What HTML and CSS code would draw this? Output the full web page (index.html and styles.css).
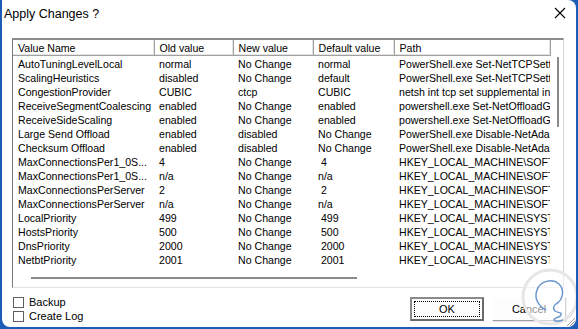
FILE: index.html
```html
<!DOCTYPE html>
<html>
<head>
	<title>Apply Changes ?</title>
	<link rel="stylesheet" href="styles.css">
</head>
<body>
	<div class="window">
		<div class="titlebar">
			<span class="title">Apply Changes ?</span>
			<svg class="close" width="12" height="12" viewBox="0 0 12 12">
				<path d="M1 1 L11 11 M11 1 L1 11" stroke="#000" stroke-width="1.1" fill="none"/>
			</svg>
		</div>

		<div class="list">
			<table>
				<colgroup>
					<col class="c-name">
					<col class="c-old">
					<col class="c-new">
					<col class="c-def">
					<col class="c-path">
				</colgroup>
				<thead>
					<tr>
						<th>Value Name</th>
						<th>Old value</th>
						<th>New value</th>
						<th>Default value</th>
						<th>Path</th>
					</tr>
				</thead>
				<tbody>
					<tr><td>AutoTuningLevelLocal</td><td>normal</td><td>No Change</td><td>normal</td><td>PowerShell.exe Set-NetTCPSetting</td></tr>
					<tr><td>ScalingHeuristics</td><td>disabled</td><td>No Change</td><td>default</td><td>PowerShell.exe Set-NetTCPSetting</td></tr>
					<tr><td>CongestionProvider</td><td>CUBIC</td><td>ctcp</td><td>CUBIC</td><td>netsh int tcp set supplemental internet</td></tr>
					<tr><td>ReceiveSegmentCoalescing</td><td>enabled</td><td>No Change</td><td>enabled</td><td>powershell.exe Set-NetOffloadGlobalSetting</td></tr>
					<tr><td>ReceiveSideScaling</td><td>enabled</td><td>No Change</td><td>enabled</td><td>powershell.exe Set-NetOffloadGlobalSetting</td></tr>
					<tr><td>Large Send Offload</td><td>enabled</td><td>disabled</td><td>No Change</td><td>PowerShell.exe Disable-NetAdapterLso</td></tr>
					<tr><td>Checksum Offload</td><td>enabled</td><td>disabled</td><td>No Change</td><td>PowerShell.exe Disable-NetAdapterChecksumOffload</td></tr>
					<tr><td>MaxConnectionsPer1_0S...</td><td>4</td><td>No Change</td><td>&nbsp;4</td><td>HKEY_LOCAL_MACHINE\SOFTWARE</td></tr>
					<tr><td>MaxConnectionsPer1_0S...</td><td>n/a</td><td>No Change</td><td>n/a</td><td>HKEY_LOCAL_MACHINE\SOFTWARE</td></tr>
					<tr><td>MaxConnectionsPerServer</td><td>2</td><td>No Change</td><td>&nbsp;2</td><td>HKEY_LOCAL_MACHINE\SOFTWARE</td></tr>
					<tr><td>MaxConnectionsPerServer</td><td>n/a</td><td>No Change</td><td>n/a</td><td>HKEY_LOCAL_MACHINE\SOFTWARE</td></tr>
					<tr><td>LocalPriority</td><td>499</td><td>No Change</td><td>&nbsp;499</td><td>HKEY_LOCAL_MACHINE\SYSTEM</td></tr>
					<tr><td>HostsPriority</td><td>500</td><td>No Change</td><td>&nbsp;500</td><td>HKEY_LOCAL_MACHINE\SYSTEM</td></tr>
					<tr><td>DnsPriority</td><td>2000</td><td>No Change</td><td>&nbsp;2000</td><td>HKEY_LOCAL_MACHINE\SYSTEM</td></tr>
					<tr><td>NetbtPriority</td><td>2001</td><td>No Change</td><td>&nbsp;2001</td><td>HKEY_LOCAL_MACHINE\SYSTEM</td></tr>
				</tbody>
			</table>
			<div class="vscroll"></div>
			<div class="hscroll"></div>
		</div>

		<div class="footer">
			<div class="checks">
				<label class="check"><span class="box"></span>Backup</label>
				<label class="check"><span class="box"></span>Create Log</label>
			</div>
			<div class="buttons">
				<button class="btn default"><span class="focus">OK</span></button>
				<button class="btn">Cancel</button>
			</div>
		</div>

		<svg class="watermark" width="60" height="62" viewBox="0 0 60 62">
			<circle cx="30" cy="31" r="27" fill="rgba(255,255,255,0.55)" stroke="#e6e6e6" stroke-width="3"/>
			<path d="M26 44 C18 40 14 32 17 24 C20 15 32 12 39 18 C45 24 43 34 36 38 C33 40 33 43 35 45 C38 47 42 46 41 49 C40 52 34 51 34 54 C35 56 40 55 43 54" stroke="#6b97cf" stroke-width="1.5" fill="none"/>
		</svg>
		<svg class="grip" width="10" height="10" viewBox="0 0 10 10">
			<path d="M9 1 L1 9 M9 4 L4 9 M9 7 L7 9" stroke="#9a9a9a" stroke-width="1"/>
		</svg>
	</div>
</body>
</html>
```

FILE: styles.css
```css
body {
  margin: 0;
  background-color: #1d5db8;
  font-family: "Liberation Sans", Arial, sans-serif;
  font-size: 11px;
  color: #000;
}

.window {
  position: relative;
  margin: 0 2px 0 2px;
  width: 574px;
  height: 327px;
  background-color: #fff;
  border-radius: 0 8px 8px 8px;
  overflow: hidden;
}

.titlebar {
  display: flex;
  align-items: center;
  justify-content: space-between;
  height: 28px;
  padding: 0 10px 0 2px;
}

.title {
  font-size: 12.5px;
}

.close {
  margin-top: -2px;
}

/* list view */
.list {
  position: relative;
  margin: 10px 0 0 10px;
  width: 552px;
  height: 250px;
  box-sizing: border-box;
  border: 1px solid #a0a0a0;
  border-top: 2px solid #8c8c8c;
  border-left: 1px solid #7a7a7a;
  border-right: 1px solid #d6d6d6;
  border-bottom: 1px solid #e3e3e3;
  overflow: hidden;
}

table {
  border-collapse: collapse;
  table-layout: fixed;
  width: 537px;
  font-size: 10.6px;
}

.c-name { width: 141px; }
.c-old { width: 79px; }
.c-new { width: 80px; }
.c-def { width: 81px; }
.c-path { width: 156px; }

th {
  height: 15px;
  padding: 0 0 0 5px;
  font-weight: normal;
  text-align: left;
  white-space: nowrap;
  overflow: hidden;
  border-right: 1px solid #a0a0a0;
  border-bottom: 1px solid #a0a0a0;
  box-shadow: inset -1px -1px 0 #e3e3e3;
}

td {
  height: 14px;
  padding: 0 0 0 5px;
  line-height: 14px;
  white-space: nowrap;
  overflow: hidden;
}

tbody tr:first-child td {
  padding-top: 1px;
}

.vscroll {
  position: absolute;
  right: 4px;
  top: 17px;
  width: 2px;
  height: 70px;
  background-color: #8a8a8a;
}

.hscroll {
  position: absolute;
  left: 18px;
  top: 237px;
  width: 326px;
  height: 2px;
  background-color: #8a8a8a;
}

/* bottom area */
.footer {
  display: flex;
  justify-content: space-between;
  padding: 9px 10px 0 11px;
}

.checks {
  display: flex;
  flex-direction: column;
  gap: 3px;
}

.check {
  display: flex;
  align-items: center;
  gap: 5px;
  height: 11px;
  line-height: 11px;
  font-size: 11px;
}

.box {
  width: 9px;
  height: 9px;
  border: 1px solid #5f5f5f;
  background-color: #fff;
}

.buttons {
  display: flex;
  gap: 8px;
}

.btn {
  width: 74px;
  height: 24px;
  padding: 0;
  background-color: #fdfdfd;
  border: 1px solid #fff;
  border-right-color: #a0a0a0;
  border-bottom-color: #a0a0a0;
  box-shadow: 1px 1px 0 #e0e0e0;
  font-family: "Liberation Sans", Arial, sans-serif;
  font-size: 11px;
  color: #000;
}

.btn.default {
  border: 2px solid #6a6a6a;
  border-top-color: #8a8a8a;
  border-left-color: #8a8a8a;
  box-shadow: none;
  padding: 2px;
}

.focus {
  display: flex;
  align-items: center;
  justify-content: center;
  height: 100%;
  box-sizing: border-box;
  border: 1px dotted #000;
}

.watermark {
  position: absolute;
  left: 518px;
  top: 266px;
}

.grip {
  position: absolute;
  right: 0;
  bottom: 0;
}
```
